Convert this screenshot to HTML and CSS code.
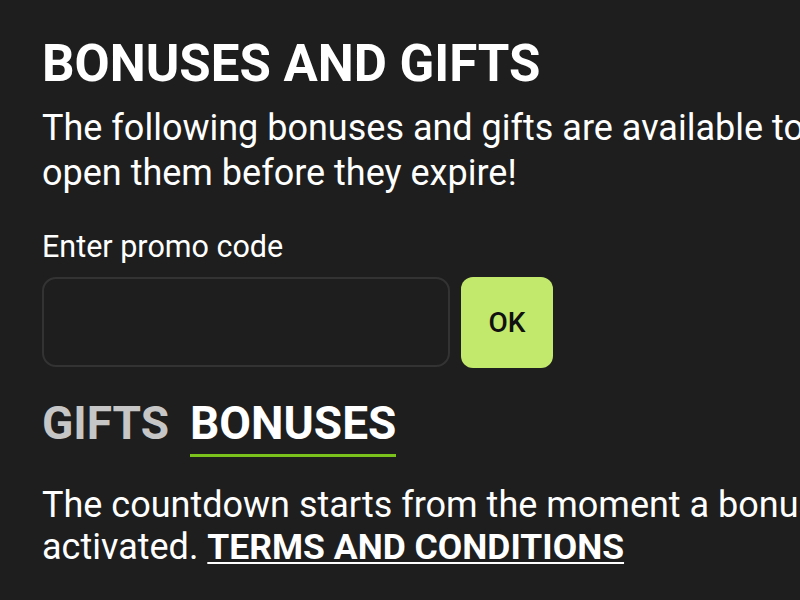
FILE: index.html
```html
<!DOCTYPE html>
<html lang="en">
<head>
<meta charset="utf-8">
<title>Bonuses and gifts</title>
<link rel="stylesheet" href="styles.css">
</head>
<body>
<main class="page">
  <h1 class="title">BONUSES AND GIFTS</h1>
  <p class="intro">The following bonuses and gifts are available to you, open them before they expire!</p>
  <label class="promo-label" for="promo">Enter promo code</label>
  <div class="promo-row">
    <input class="promo-input" id="promo" type="text">
    <button class="promo-btn" type="button">OK</button>
  </div>
  <nav class="tabs">
    <span class="tab">GIFTS</span>
    <span class="tab tab-active">BONUSES</span>
  </nav>
  <p class="note">The countdown starts from the moment a bonus is activated. <a class="terms" href="#">TERMS AND CONDITIONS</a></p>
</main>
</body>
</html>
```

FILE: styles.css
```css
html, body {
  margin: 0;
  padding: 0;
  background: #1e1e1e;
  overflow: hidden;
}
body {
  width: 800px;
  height: 600px;
  font-family: Roboto, "Liberation Sans", sans-serif;
  color: #ffffff;
}
.page {
  width: 880px;
  padding: 35px 0 0 42px;
  display: flex;
  flex-direction: column;
  align-items: flex-start;
}
.title {
  margin: 0;
  font-size: 51px;
  line-height: 58px;
  font-weight: 700;
}
.intro {
  margin: 13px 0 0;
  font-size: 36px;
  line-height: 45px;
  font-weight: 400;
}
.promo-label {
  margin-top: 33px;
  font-size: 30.5px;
  line-height: 36px;
}
.promo-row {
  margin-top: 12px;
  display: flex;
  gap: 11px;
}
.promo-input {
  box-sizing: border-box;
  width: 408px;
  height: 90px;
  border: 2px solid #333333;
  border-radius: 14px;
  background: transparent;
  outline: none;
}
.promo-btn {
  width: 92px;
  height: 91px;
  border: 0;
  border-radius: 12px;
  background: #c2e96b;
  color: #111111;
  font-family: Roboto, "Liberation Sans", sans-serif;
  font-size: 28px;
  font-weight: 500;
  padding: 0;
}
.tabs {
  margin-top: 30px;
  display: flex;
  gap: 21px;
}
.tab {
  font-size: 46px;
  line-height: 50px;
  font-weight: 700;
  color: #c6c6c6;
  padding-bottom: 6px;
  border-bottom: 3px solid transparent;
}
.tab-active {
  color: #ffffff;
  border-bottom-color: #7cc21c;
}
.note {
  margin: 27px 0 0;
  font-size: 36px;
  line-height: 42px;
}
.terms {
  color: #ffffff;
  font-weight: 700;
  font-size: 35.5px;
  text-decoration: underline;
  text-decoration-thickness: 2px;
  text-underline-offset: 3px;
}
```
